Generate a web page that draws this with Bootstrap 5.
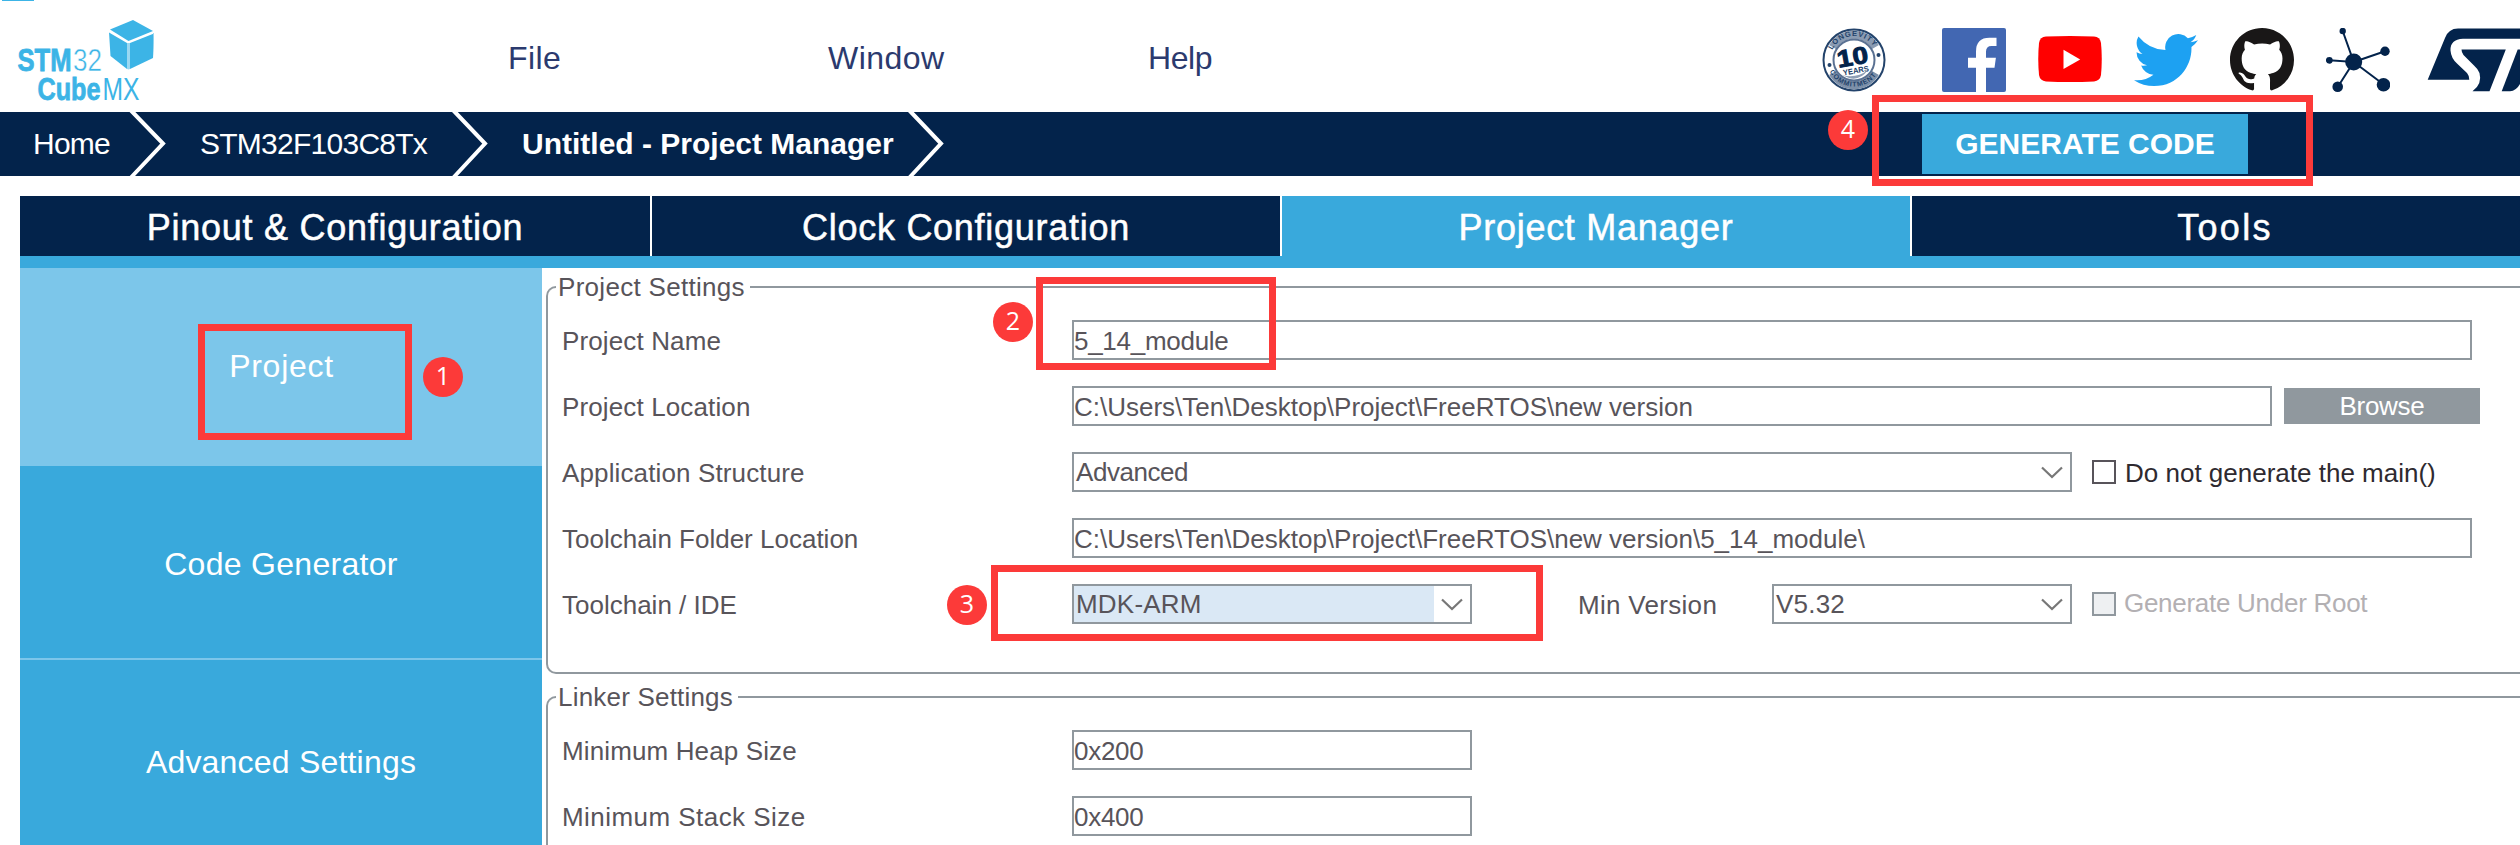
<!DOCTYPE html>
<html lang="en">
<head>
<meta charset="utf-8">
<title>STM32CubeMX - Project Manager</title>
<link href="https://cdn.jsdelivr.net/npm/bootstrap@5.3.0/dist/css/bootstrap.min.css" rel="stylesheet">
<style>
:root{--navy:#03234b;--sky:#39a9dc;--pale:#7cc6ea;--line:#90989e;--ink:#58545a;--mark-red:#fc3a39}
body{font-family:"Liberation Sans",Arial,sans-serif;font-size:26px;line-height:40px;color:var(--ink);background:#fff;width:2520px;height:845px;overflow:hidden}
.ls-n7{letter-spacing:-.74px}.ls-n4{letter-spacing:-.45px}.ls-n3{letter-spacing:-.28px}.ls-1{letter-spacing:.13px}.ls-2{letter-spacing:.2px}.ls-3{letter-spacing:.3px}.ls-4{letter-spacing:.45px}.ls-7{letter-spacing:.73px}.ls-wide{letter-spacing:2.3px}
.topbar{height:112px}
.topbar .logo{width:508px;height:112px}
.menu-item{width:320px;font-size:32px;line-height:117px;color:#2b3a6e}
.social{gap:32px;margin-left:354px;padding-top:28px}
.social svg{display:block;flex:none}
.crumbs{height:64px;background:var(--navy);color:#fff;font-size:30px;line-height:64px}
.crumbs svg{flex:none}
.crumb-home{width:132px;padding-left:33px}
.crumb-mcu{width:286px;padding-left:33px}
.crumb-page{width:421px;padding-left:34px}
.btn-generate{width:326px;height:60px;margin-left:978px;background:var(--sky);color:#fff;font-size:30px;line-height:60px}
.workspace{padding:20px 0 0 20px;height:669px}
.tabs{gap:2px;border-bottom:12px solid var(--sky)}
.tab-cell{width:628px;height:60px;background:var(--navy);color:#fff;font-size:36px;line-height:63px;-webkit-text-stroke:.5px #fff}
.tab-cell:first-child{width:630px}
.tab-cell:last-child{width:608px;padding-left:18px}
.tab-cell.on{background:var(--sky)}
.side{width:522px;background:var(--sky);color:#fff;font-size:32px}
.side-item{height:198px;line-height:197px}
.side-item.on{background:var(--pale);padding-left:1px}
.side-item.ruled{height:194px;border-bottom:2px solid var(--pale);line-height:196px}
.side-item.last{height:185px;line-height:205px}
.panel{padding:6px 0 0 4px;width:1978px}
.group{border:2px solid var(--line);border-right:0;border-radius:10px 0 0 10px;padding:20px 0 48px 13px;margin-bottom:10px}
.group legend{float:none;width:auto;font-size:26px;line-height:26px;margin:0 0 0 -5px;padding:0 5px 0 2px;color:var(--ink)}
.group.open{border-bottom:0;border-radius:10px 0 0 0;padding-bottom:9px;margin-bottom:0}
.rows{gap:26px}
.line{height:40px}
.cap{width:511px;line-height:40px;padding:2px 0 0 1px}
.box{height:40px;border:2px solid var(--line);background:#fff;line-height:38px}
.w-full{width:1400px}.w-loc{width:1200px}.w-struct{width:1000px}.w-ide{width:400px}.w-ver{width:300px}
.pick{padding-left:2px}
.pick svg{margin:2px 7px 0 0}
.pick.hot{background:linear-gradient(to right,#dae8f5 360px,#fff 360px)}
.ver-cap{width:300px;padding:2px 0 0 106px}
.btn-browse{width:196px;height:36px;margin-left:12px;background:var(--line);color:#fff;line-height:37px}
.tick{width:24px;height:24px;border:2px solid var(--ink);margin-left:20px}
.tick.off{background:#eef0f2;border-color:var(--line)}
.tick-cap{color:#2e2a30;padding:1px 0 0 9px}
.tick-cap-off{color:#b3b0b3;padding:0 0 2px 8px}
.callout-box{position:absolute;border:7px solid var(--mark-red)}
.callout-dot{position:absolute;width:40px;height:40px;border-radius:50%;background:var(--mark-red);color:#fff;font:25px/37px "Open Sans",sans-serif;text-align:center}
.c1{left:198px;top:324px;width:214px;height:116px}.d1{left:423px;top:357px}
.c2{left:1036px;top:277px;width:240px;height:93px}.d2{left:993px;top:302px}
.c3{left:991px;top:565px;width:552px;height:76px}.d3{left:947px;top:585px}
.c4{left:1872px;top:95px;width:441px;height:91px}.d4{left:1828px;top:110px}
</style>
<script src="https://cdn.jsdelivr.net/npm/bootstrap@5.3.0/dist/js/bootstrap.bundle.min.js"></script>
</head>
<body class="position-relative">

<header class="topbar d-flex">
  <svg class="logo flex-shrink-0" viewBox="0 0 508 112" fill="#3cb4e6" font-family="Liberation Sans, sans-serif">
    <rect x="2" y="0" width="32" height="1"/>
    <path d="M110 29.500L133 20L153 31L128.500 41z"/>
    <path d="M109 32.500L127 43V69L110.500 56z"/>
    <path d="M154 33.500L130 43V69L153 58z"/>
    <path d="M127 43h3v26l-1.500.6l-1.500-.6zM153 33l1 .5l-1 24.500" fill="#9ad8f2"/>
    <text x="17.500" y="71" font-size="32" font-weight="bold" textLength="54" lengthAdjust="spacingAndGlyphs" stroke="#3cb4e6" stroke-width=".8">STM</text>
    <text x="73" y="71" font-size="32" textLength="29" lengthAdjust="spacingAndGlyphs" stroke="#fff" stroke-width=".5">32</text>
    <text x="37.500" y="99.500" font-size="32" font-weight="bold" textLength="63" lengthAdjust="spacingAndGlyphs" stroke="#3cb4e6" stroke-width=".8">Cube</text>
    <text x="102.500" y="99.500" font-size="32" textLength="37" lengthAdjust="spacingAndGlyphs">MX</text>
  </svg>
  <nav class="d-flex flex-shrink-0">
    <span class="menu-item ls-4">File</span>
    <span class="menu-item ls-4">Window</span>
    <span class="menu-item ls-n4">Help</span>
  </nav>
  <div class="social d-flex">
    <svg width="88" height="64" viewBox="0 0 88 64" fill="#23436b" font-family="Liberation Sans, sans-serif" font-weight="bold">
      <circle cx="32" cy="32" r="30.500" fill="#fff" stroke="#23436b" stroke-width="2"/>
      <path d="M10.500 19A25 25 0 0 1 53.500 19" fill="none" stroke="#8a9bb2" stroke-width="8"/>
      <path d="M10.500 45A25 25 0 0 0 53.500 45" fill="none" stroke="#7d90a9" stroke-width="8"/>
      <path id="arcTop" d="M10.500 22A23.500 23.500 0 0 1 53.500 22" fill="none"/>
      <path id="arcLow" d="M7.500 43.500A27.500 27.500 0 0 0 56.500 43.500" fill="none"/>
      <text font-size="7.500" textLength="50"><textPath href="#arcTop">LONGEVITY</textPath></text>
      <text font-size="7" textLength="56"><textPath href="#arcLow">COMMITMENT</textPath></text>
      <circle cx="32" cy="32" r="20.500" fill="#fff" stroke="#5a7192" stroke-width="2"/>
      <circle cx="7.500" cy="37" r="2"/><circle cx="56.500" cy="27" r="2"/>
      <g transform="rotate(-10 32 32)">
        <text x="15.500" y="37" font-size="24" textLength="31" lengthAdjust="spacingAndGlyphs" fill="#03234b" stroke="#03234b">10</text>
        <text x="19" y="45.500" font-size="8" textLength="26" lengthAdjust="spacingAndGlyphs">YEARS</text>
      </g>
      <path d="M20 47Q34 51 46 42Q38 53 27 50z" fill="#8fa0b6"/>
    </svg>
    <svg width="64" height="64" viewBox="0 0 64 64"><rect width="64" height="64" rx="2" fill="#4267b2"/><path d="M34 64V39.700H26V29.700H34V23.500Q34 9.700 47.500 9.700H54.500V17.900H49.500Q44 17.900 44 23.500V29.700H53.900L52.500 39.700H44V64z" fill="#fff"/></svg>
    <svg width="64" height="64" viewBox="0 0 64 64"><path d="M8 8.600Q32 7.400 56 8.600Q62 9 63 15Q64.500 31 63 47Q62 53 56 53.400Q32 54.600 8 53.400Q2 53 1 47Q-.5 31 1 15Q2 9 8 8.600z" fill="#f00"/><path d="M25.500 21.800V41L42.200 31.400z" fill="#fff"/></svg>
    <svg width="64" height="64" viewBox="0 .5 16 16" fill="#1da1f2"><path d="M5.026 15c6.038 0 9.341-5.003 9.341-9.334 0-.14 0-.282-.006-.422A6.685 6.685 0 0 0 16 3.542a6.658 6.658 0 0 1-1.889.518 3.301 3.301 0 0 0 1.447-1.817 6.533 6.533 0 0 1-2.087.793A3.286 3.286 0 0 0 7.875 6.030a9.325 9.325 0 0 1-6.767-3.429 3.289 3.289 0 0 0 1.018 4.382A3.323 3.323 0 0 1 .64 6.575v.045a3.288 3.288 0 0 0 2.632 3.218 3.203 3.203 0 0 1-.865.115 3.230 3.230 0 0 1-.614-.057 3.283 3.283 0 0 0 3.067 2.277A6.588 6.588 0 0 1 .78 13.580a6.320 6.320 0 0 1-.78-.045A9.344 9.344 0 0 0 5.026 15z"/></svg>
    <svg width="64" height="64" viewBox="0 0 16 16" fill="#191717"><path d="M8 0C3.580 0 0 3.580 0 8c0 3.540 2.290 6.530 5.470 7.590.4.070.55-.17.55-.38 0-.19-.01-.82-.01-1.490-2.010.37-2.530-.49-2.690-.94-.09-.23-.48-.94-.82-1.130-.28-.15-.68-.52-.01-.53.63-.01 1.080.58 1.230.82.72 1.210 1.870.87 2.330.66.07-.52.28-.87.51-1.070-1.780-.2-3.640-.89-3.640-3.950 0-.87.31-1.590.82-2.150-.08-.2-.36-1.020.08-2.120 0 0 .67-.21 2.200.82.64-.18 1.320-.27 2-.27.68 0 1.360.09 2 .27 1.530-1.040 2.200-.82 2.200-.82.44 1.100.16 1.920.08 2.120.51.56.82 1.270.82 2.150 0 3.070-1.870 3.750-3.650 3.950.29.25.54.73.54 1.480 0 1.070-.01 1.930-.01 2.200 0 .21.15.46.55.38A8.012 8.012 0 0 0 16 8c0-4.420-3.580-8-8-8z"/></svg>
    <svg width="64" height="64" viewBox="0 0 64 64" fill="#03234b"><path d="M16.700 3L27.700 34L3.300 32.300M27.700 34L59 23.300M27.700 34L58 56.700M27.700 34L11.700 59" fill="none" stroke="#03234b" stroke-width="2"/><circle cx="27.700" cy="34" r="8.500"/><circle cx="16.700" cy="3" r="3.200"/><circle cx="3.300" cy="32.300" r="3.400"/><circle cx="59" cy="23.300" r="4.700"/><circle cx="57.500" cy="56.700" r="6.800"/><circle cx="11.700" cy="58.700" r="5.300"/></svg>
    <svg class="ms-1" width="94" height="64" viewBox="-2 0 94 64" fill="#03234b"><path d="M-.3 51.800L17 10Q20.500 .5 30 .5H92V10.800H35Q22 11.500 22.500 22.500Q23 30 29 35.500L39 45Q41.500 48 41.300 51.800z"/><path d="M33.500 21.500H77.800L61.500 63.300H44.500Q54.500 56 51.500 45Q50 41 46 37.500L35.500 27Q33.500 24.500 33.500 21.500z"/><path d="M73.700 63.300L89.700 21.500H92V56Q88 63 82 63.300z"/></svg>
  </div>
</header>

<div class="crumbs d-flex">
  <span class="crumb-home flex-shrink-0 ls-n7">Home</span>
  <svg width="35" height="64" viewBox="0 0 35 64" overflow="visible"><path d="M-1.500-2L31 31.500L-1.500 66" fill="none" stroke="#fff" stroke-width="4"/></svg>
  <span class="crumb-mcu flex-shrink-0 ls-n7">STM32F103C8Tx</span>
  <svg width="35" height="64" viewBox="0 0 35 64" overflow="visible"><path d="M0-2L32 31.500L0 66" fill="none" stroke="#fff" stroke-width="4"/></svg>
  <span class="crumb-page flex-shrink-0 fw-bold">Untitled - Project Manager</span>
  <svg width="35" height="64" viewBox="0 0 35 64" overflow="visible"><path d="M0-2L32 31.500L0 66" fill="none" stroke="#fff" stroke-width="4"/></svg>
  <div class="btn-generate fw-bold text-center flex-shrink-0 my-auto">GENERATE CODE</div>
</div>

<main class="workspace">
  <div class="tabs d-flex text-center">
    <div class="tab-cell flex-shrink-0 ls-7">Pinout &amp; Configuration</div>
    <div class="tab-cell flex-shrink-0 ls-7">Clock Configuration</div>
    <div class="tab-cell flex-shrink-0 ls-7 on">Project Manager</div>
    <div class="tab-cell flex-shrink-0 ls-wide">Tools</div>
  </div>
  <div class="d-flex">
    <aside class="side text-center flex-shrink-0">
      <div class="side-item on ls-7">Project</div>
      <div class="side-item ruled ls-3">Code Generator</div>
      <div class="side-item last ls-2">Advanced Settings</div>
    </aside>
    <section class="panel flex-shrink-0">
      <fieldset class="group">
        <legend class="ls-3">Project Settings</legend>
        <div class="rows d-flex flex-column">
          <div class="line d-flex align-items-center">
            <span class="cap flex-shrink-0 ls-1">Project Name</span>
            <div class="box w-full ls-n3">5_14_module</div>
          </div>
          <div class="line d-flex align-items-center">
            <span class="cap flex-shrink-0 ls-1">Project Location</span>
            <div class="box w-loc">C:\Users\Ten\Desktop\Project\FreeRTOS\new version</div>
            <div class="btn-browse text-center ls-n3">Browse</div>
          </div>
          <div class="line d-flex align-items-center">
            <span class="cap flex-shrink-0 ls-1">Application Structure</span>
            <div class="box pick w-struct d-flex justify-content-between align-items-center"><span class="ls-n4">Advanced</span><svg width="22" height="14" viewBox="0 0 22 14"><path d="M1 1.500L11 11L21 1.500" fill="none" stroke="#777" stroke-width="2.200"/></svg></div>
            <div class="tick"></div><span class="tick-cap">Do not generate the main()</span>
          </div>
          <div class="line d-flex align-items-center">
            <span class="cap flex-shrink-0">Toolchain Folder Location</span>
            <div class="box w-full">C:\Users\Ten\Desktop\Project\FreeRTOS\new version\5_14_module\</div>
          </div>
          <div class="line d-flex align-items-center">
            <span class="cap flex-shrink-0">Toolchain / IDE</span>
            <div class="box pick hot w-ide d-flex justify-content-between align-items-center"><span class="ls-2">MDK-ARM</span><svg width="22" height="14" viewBox="0 0 22 14"><path d="M1 1.500L11 11L21 1.500" fill="none" stroke="#777" stroke-width="2.200"/></svg></div>
            <span class="ver-cap ls-3">Min Version</span>
            <div class="box pick w-ver d-flex justify-content-between align-items-center"><span class="ls-2">V5.32</span><svg width="22" height="14" viewBox="0 0 22 14"><path d="M1 1.500L11 11L21 1.500" fill="none" stroke="#777" stroke-width="2.200"/></svg></div>
            <div class="tick off"></div><span class="tick-cap-off ls-n3">Generate Under Root</span>
          </div>
        </div>
      </fieldset>
      <fieldset class="group open">
        <legend class="ls-2">Linker Settings</legend>
        <div class="rows d-flex flex-column">
          <div class="line d-flex align-items-center">
            <span class="cap flex-shrink-0 ls-1">Minimum Heap Size</span>
            <div class="box w-ide ls-n3">0x200</div>
          </div>
          <div class="line d-flex align-items-center">
            <span class="cap flex-shrink-0 ls-4">Minimum Stack Size</span>
            <div class="box w-ide ls-n3">0x400</div>
          </div>
        </div>
      </fieldset>
    </section>
  </div>
</main>

<div class="callout-box c1"></div><div class="callout-dot d1">1</div>
<div class="callout-box c2"></div><div class="callout-dot d2">2</div>
<div class="callout-box c3"></div><div class="callout-dot d3">3</div>
<div class="callout-box c4"></div><div class="callout-dot d4">4</div>
</body>
</html>
